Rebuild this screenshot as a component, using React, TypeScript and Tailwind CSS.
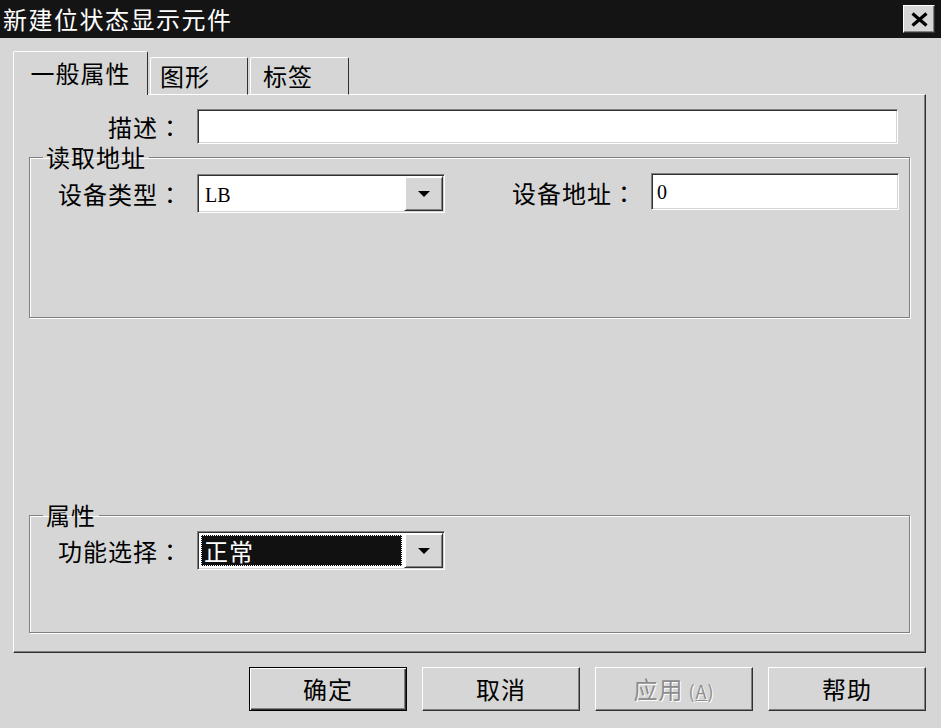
import React from 'react';

// classic 3D bevels
const raised = 'border border-t-white border-l-white border-r-[#303030] border-b-[#303030] shadow-[inset_-1px_-1px_0_#808080]';
const sunken = 'border border-t-[#808080] border-l-[#808080] border-r-white border-b-white shadow-[inset_1px_1px_0_#303030,inset_-1px_-1px_0_#d4d4d4]';
const groupBox = 'border border-[#808080] shadow-[1px_1px_0_#fff,inset_1px_1px_0_#fff]';

// full-width colon centred in its cell, as in the old dialog font
function Label({ text, className = '' }: { text: string; className?: string }) {
  return (
    <span className={`text-[24px] tracking-[1px] ${className}`}>
      {text}
      <span className="font-['Noto_Sans_CJK_JP',sans-serif]">：</span>
    </span>
  );
}

function DropButton() {
  return (
    <div className={`w-[39px] h-full bg-[#d6d6d6] ${raised} shadow-[inset_1px_1px_0_#fff,inset_-1px_-1px_0_#808080] flex items-center justify-center`}>
      <svg width="12" height="6" viewBox="0 0 12 6">
        <path d="M0 0H12L6 6Z" fill="#000" />
      </svg>
    </div>
  );
}

function Combo({ value, selected }: { value: string; selected?: boolean }) {
  return (
    <div className={`w-[248px] h-[39px] bg-white ${sunken} flex items-stretch p-[1px]`}>
      <div className="flex-1 flex items-center pl-[2px] pr-[2px]">
        {selected ? (
          <div className="w-full h-[31px] bg-[#111] outline-1 outline-dotted outline-white -outline-offset-1 flex items-center pl-[3px]">
            <span className="text-white text-[24px] leading-none tracking-[1px]">{value}</span>
          </div>
        ) : (
          <span className="font-['Liberation_Serif',serif] text-[20px] leading-none pl-[4px] pt-[2px]">{value}</span>
        )}
      </div>
      <DropButton />
    </div>
  );
}

function Button({ label, def, disabled }: { label: React.ReactNode; def?: boolean; disabled?: boolean }) {
  const bevel = def
    ? 'border border-black shadow-[inset_1px_1px_0_#fff,inset_-1px_-1px_0_#303030,inset_-2px_-2px_0_#808080]'
    : raised + ' shadow-[inset_-1px_-1px_0_#808080]';
  return (
    <div className={`w-[158px] h-[44px] bg-[#d6d6d6] flex items-center justify-center ${bevel}`}>
      <span
        className={`text-[24px] leading-none tracking-[1px] ${disabled ? 'text-[#8c8c8c] [text-shadow:1px_1px_0_#fff]' : 'text-black'}`}
      >
        {label}
      </span>
    </div>
  );
}

export default function App() {
  return (
    <div className="w-[941px] h-[728px] bg-[#d6d6d6] font-['Noto_Sans_CJK_SC','Noto_Sans',sans-serif] text-black flex flex-col overflow-hidden select-none">
      {/* title bar */}
      <div className="h-[38px] bg-[#141414] flex items-center justify-between pl-[3px] pr-[6px]">
        <span className="text-white text-[24px] leading-none tracking-[1.5px]">新建位状态显示元件</span>
        <div className={`w-[32px] h-[28px] bg-[#d6d6d6] ${raised} flex items-center justify-center`}>
          <svg width="17" height="15" viewBox="0 0 17 15">
            <path d="M1.5 1.5L15.5 13.5M15.5 1.5L1.5 13.5" stroke="#000" strokeWidth="3.2" />
          </svg>
        </div>
      </div>

      {/* tabs + page */}
      <div className="pl-[13px] pt-[14px]">
        <div className="flex items-end h-[43px] gap-[2px] relative z-10 -mb-[1px]">
          <div className="w-[135px] h-[44px] bg-[#d6d6d6] border-t border-l border-r border-t-white border-l-white border-r-[#303030] rounded-t-[2px] flex items-center justify-center pb-[2px]">
            <span className="text-[24px] leading-none tracking-[1px]">一般属性</span>
          </div>
          <div className="w-[98px] h-[38px] border-t border-l border-r border-t-white border-l-white border-r-[#303030] rounded-t-[2px] flex items-center pl-[9px] border-b border-b-white">
            <span className="text-[24px] leading-none tracking-[1px]">图形</span>
          </div>
          <div className="w-[99px] h-[38px] border-t border-l border-r border-t-white border-l-white border-r-[#303030] rounded-t-[2px] flex items-center pl-[12px] border-b border-b-white">
            <span className="text-[24px] leading-none tracking-[1px]">标签</span>
          </div>
        </div>

        <div className={`w-[913px] h-[559px] ${raised} flex flex-col px-[15px] pt-[14px] pb-[19px]`}>
          {/* description */}
          <div className="flex items-center">
            <Label text="描述" className="w-[154px] text-right leading-none" />
            <div className={`ml-[14px] w-[701px] h-[35px] bg-white ${sunken}`} />
          </div>

          {/* read address */}
          <fieldset className={`${groupBox} pt-[4px] pb-[104px]`}>
            <legend className="ml-[13px] px-[3px] text-[24px] leading-[26px] tracking-[1px]">读取地址</legend>
            <div className="flex items-start">
              <Label text="设备类型" className="w-[153px] text-right leading-[39px]" />
              <div className="ml-[14px]">
                <Combo value="LB" />
              </div>
              <Label text="设备地址" className="ml-[67px] leading-[37px]" />
              <div className={`ml-[14px] -mt-[1px] w-[248px] h-[37px] bg-white ${sunken} flex items-center pl-[5px]`}>
                <span className="font-['Liberation_Serif',serif] text-[20px] leading-none">0</span>
              </div>
            </div>
          </fieldset>

          {/* attributes */}
          <fieldset className={`${groupBox} mt-auto pt-[3px] pb-[62px]`}>
            <legend className="ml-[13px] px-[3px] text-[24px] leading-[26px] tracking-[1px]">属性</legend>
            <div className="flex items-center">
              <Label text="功能选择" className="w-[153px] text-right leading-none" />
              <div className="ml-[14px]">
                <Combo value="正常" selected />
              </div>
            </div>
          </fieldset>
        </div>
      </div>

      {/* buttons */}
      <div className="flex justify-end gap-[15px] pr-[15px] mt-[14px]">
        <Button label="确定" def />
        <Button label="取消" />
        <Button
          disabled
          label={
            <>
              应用
              <span className="text-[18px] ml-[5px]">
                (<span className="underline">A</span>)
              </span>
            </>
          }
        />
        <Button label="帮助" />
      </div>
    </div>
  );
}
